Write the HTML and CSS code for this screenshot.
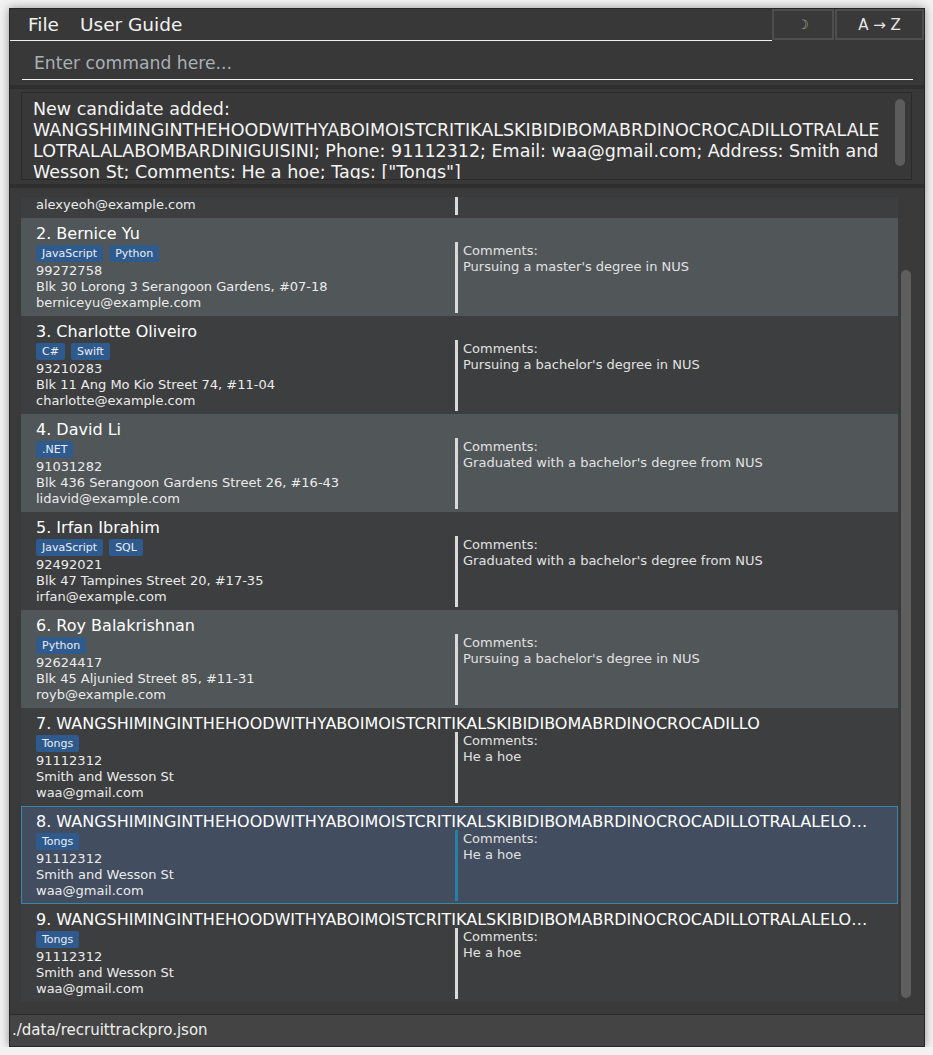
FILE: index.html
```html
<!DOCTYPE html>
<html lang="en">
<head>
<meta charset="utf-8">
<title>RecruitTrackPro</title>
<link rel="stylesheet" href="styles.css">
</head>
<body>
<div class="window">
  <div class="menubar">
    <div class="menu-left">
      <span class="menu-item">File</span>
      <span class="menu-item">User Guide</span>
    </div>
    <button class="tool-btn moon-btn">☽</button>
    <button class="tool-btn sort-btn">A → Z</button>
  </div>

  <div class="command-pane">
    <div class="command-field">Enter command here...</div>
  </div>
  <div class="separator"></div>

  <div class="result-pane">
    <div class="result-box">
      <div class="result-text">
        <span class="rline">New candidate added:</span>
        <span class="rline">WANGSHIMINGINTHEHOODWITHYABOIMOISTCRITIKALSKIBIDIBOMABRDINOCROCADILLOTRALALE</span>
        <span class="rline">LOTRALALABOMBARDINIGUISINI; Phone: 91112312; Email: waa@gmail.com; Address: Smith and</span>
        <span class="rline">Wesson St; Comments: He a hoe; Tags: ["Tongs"]</span>
      </div>
      <div class="rscroll"><div class="rthumb"></div></div>
    </div>
  </div>
  <div class="separator"></div>

  <div class="list-pane">
    <div class="list-viewport">
      <div class="list-cells">
        <div class="card even">
          <div class="card-name">1. Alex Yeoh</div>
          <div class="card-body">
            <div class="details">
              <div class="tags"><span class="tag">Java</span></div>
              <div class="line">87438807</div>
              <div class="line">Blk 30 Geylang Street 29, #06-40</div>
              <div class="line">alexyeoh@example.com</div>
            </div>
            <div class="comments"><div class="line">&nbsp;</div></div>
          </div>
        </div>

        <div class="card odd">
          <div class="card-name">2. Bernice Yu</div>
          <div class="card-body">
            <div class="details">
              <div class="tags"><span class="tag">JavaScript</span><span class="tag">Python</span></div>
              <div class="line">99272758</div>
              <div class="line">Blk 30 Lorong 3 Serangoon Gardens, #07-18</div>
              <div class="line">berniceyu@example.com</div>
            </div>
            <div class="comments">
              <div class="line">Comments:</div>
              <div class="line">Pursuing a master's degree in NUS</div>
            </div>
          </div>
        </div>

        <div class="card even">
          <div class="card-name">3. Charlotte Oliveiro</div>
          <div class="card-body">
            <div class="details">
              <div class="tags"><span class="tag">C#</span><span class="tag">Swift</span></div>
              <div class="line">93210283</div>
              <div class="line">Blk 11 Ang Mo Kio Street 74, #11-04</div>
              <div class="line">charlotte@example.com</div>
            </div>
            <div class="comments">
              <div class="line">Comments:</div>
              <div class="line">Pursuing a bachelor's degree in NUS</div>
            </div>
          </div>
        </div>

        <div class="card odd">
          <div class="card-name">4. David Li</div>
          <div class="card-body">
            <div class="details">
              <div class="tags"><span class="tag">.NET</span></div>
              <div class="line">91031282</div>
              <div class="line">Blk 436 Serangoon Gardens Street 26, #16-43</div>
              <div class="line">lidavid@example.com</div>
            </div>
            <div class="comments">
              <div class="line">Comments:</div>
              <div class="line">Graduated with a bachelor's degree from NUS</div>
            </div>
          </div>
        </div>

        <div class="card even">
          <div class="card-name">5. Irfan Ibrahim</div>
          <div class="card-body">
            <div class="details">
              <div class="tags"><span class="tag">JavaScript</span><span class="tag">SQL</span></div>
              <div class="line">92492021</div>
              <div class="line">Blk 47 Tampines Street 20, #17-35</div>
              <div class="line">irfan@example.com</div>
            </div>
            <div class="comments">
              <div class="line">Comments:</div>
              <div class="line">Graduated with a bachelor's degree from NUS</div>
            </div>
          </div>
        </div>

        <div class="card odd">
          <div class="card-name">6. Roy Balakrishnan</div>
          <div class="card-body">
            <div class="details">
              <div class="tags"><span class="tag">Python</span></div>
              <div class="line">92624417</div>
              <div class="line">Blk 45 Aljunied Street 85, #11-31</div>
              <div class="line">royb@example.com</div>
            </div>
            <div class="comments">
              <div class="line">Comments:</div>
              <div class="line">Pursuing a bachelor's degree in NUS</div>
            </div>
          </div>
        </div>

        <div class="card even">
          <div class="card-name">7. WANGSHIMINGINTHEHOODWITHYABOIMOISTCRITIKALSKIBIDIBOMABRDINOCROCADILLO</div>
          <div class="card-body">
            <div class="details">
              <div class="tags"><span class="tag">Tongs</span></div>
              <div class="line">91112312</div>
              <div class="line">Smith and Wesson St</div>
              <div class="line">waa@gmail.com</div>
            </div>
            <div class="comments">
              <div class="line">Comments:</div>
              <div class="line">He a hoe</div>
            </div>
          </div>
        </div>

        <div class="card selected">
          <div class="card-name">8. WANGSHIMINGINTHEHOODWITHYABOIMOISTCRITIKALSKIBIDIBOMABRDINOCROCADILLOTRALALELOTRALALABOMBARDINIGUISINI</div>
          <div class="card-body">
            <div class="details">
              <div class="tags"><span class="tag">Tongs</span></div>
              <div class="line">91112312</div>
              <div class="line">Smith and Wesson St</div>
              <div class="line">waa@gmail.com</div>
            </div>
            <div class="comments">
              <div class="line">Comments:</div>
              <div class="line">He a hoe</div>
            </div>
          </div>
        </div>

        <div class="card even">
          <div class="card-name">9. WANGSHIMINGINTHEHOODWITHYABOIMOISTCRITIKALSKIBIDIBOMABRDINOCROCADILLOTRALALELOTRALALABOMBARDINIGUISINI</div>
          <div class="card-body">
            <div class="details">
              <div class="tags"><span class="tag">Tongs</span></div>
              <div class="line">91112312</div>
              <div class="line">Smith and Wesson St</div>
              <div class="line">waa@gmail.com</div>
            </div>
            <div class="comments">
              <div class="line">Comments:</div>
              <div class="line">He a hoe</div>
            </div>
          </div>
        </div>
      </div>
      <div class="lscroll"><div class="lthumb"></div></div>
    </div>
  </div>

  <div class="status-bar">./data/recruittrackpro.json</div>
</div>
</body>
</html>
```

FILE: styles.css
```css
html, body {
  margin: 0;
  padding: 0;
}
body {
  background: #f2f2f2;
  font-family: "DejaVu Sans", "Liberation Sans", sans-serif;
  color: #ffffff;
}
.window {
  margin: 8px 0 0 9px;
  width: 914px;
  height: 1037px;
  border: 1px solid #262626;
  background: #383838;
  display: flex;
  flex-direction: column;
  box-shadow: 0 0 9px rgba(0, 0, 0, 0.4);
  overflow: hidden;
}

/* menu */
.menubar {
  display: flex;
  height: 32px;
  flex: none;
}
.menu-left {
  flex: 1;
  display: flex;
  align-items: center;
  padding-left: 8px;
  border-bottom: 1px solid #f0f0f0;
}
.menu-item {
  font-size: 18.5px;
  padding: 0 10px;
  color: #f2f2f2;
  line-height: 28px;
}
.menu-item + .menu-item {
  padding-left: 11px;
}
.tool-btn {
  height: 31px;
  background: #393939;
  border: 2px solid #4e4e4e;
  font-family: "DejaVu Sans", sans-serif;
  padding: 0;
  margin: 0;
}
.moon-btn {
  width: 62px;
  color: #b8b09a;
  font-size: 13px;
  margin-right: 1px;
}
.sort-btn {
  width: 89px;
  color: #e6e6e6;
  font-size: 15px;
}

/* command */
.command-pane {
  height: 44px;
  flex: none;
  padding: 6px 11px 0 12px;
  box-sizing: border-box;
}
.command-field {
  height: 32px;
  line-height: 32px;
  border-bottom: 1px solid #f4f4f4;
  padding-left: 12px;
  font-size: 17.2px;
  color: #a9b0b6;
}
.separator {
  height: 4px;
  flex: none;
  background: #2e2e2e;
}

/* result */
.result-pane {
  height: 95px;
  flex: none;
  padding: 3px 12px 0 11px;
  box-sizing: border-box;
}
.result-box {
  height: 88px;
  box-sizing: border-box;
  border: 1px solid #2a2a2a;
  background: #383838;
  display: flex;
  overflow: hidden;
}
.result-text {
  flex: 1;
  min-width: 0;
  padding: 6px 0 0 11px;
  font-size: 17.5px;
  line-height: 21px;
  color: #f4f4f4;
  overflow: hidden;
}
.rline {
  display: block;
  white-space: nowrap;
}
.rscroll {
  width: 16px;
  flex: none;
  padding-top: 6px;
}
.rthumb {
  width: 10px;
  height: 67px;
  background: #5c5c5c;
  border-radius: 5px;
}

/* list */
.list-pane {
  flex: 1;
  padding: 9px 10px 10px 11px;
  box-sizing: border-box;
  background: #3a3a3a;
  min-height: 0;
}
.list-viewport {
  height: 100%;
  display: flex;
  overflow: hidden;
}
.list-cells {
  flex: 1;
  min-width: 0;
  margin-top: -77px;
}
.lscroll {
  width: 16px;
  flex: none;
  padding: 73px 0 0 3px;
  box-sizing: border-box;
}
.lthumb {
  width: 10px;
  height: 728px;
  background: #5e5e5e;
  border-radius: 5px;
}

.card {
  height: 98px;
  box-sizing: border-box;
  padding: 6px 22px 3px 15px;
  overflow: hidden;
}
.card.even {
  background: #3c3e3f;
}
.card.odd {
  background: #515658;
}
.card.selected {
  background: #424d5f;
  border: 1px solid #3a86a8;
  padding: 5px 21px 2px 14px;
}
.card-name {
  font-size: 16px;
  line-height: 20px;
  height: 18px;
  color: #ffffff;
  white-space: nowrap;
  overflow: hidden;
  text-overflow: ellipsis;
}
.card-body {
  display: grid;
  grid-template-columns: 419px 1fr;
  height: 71px;
}
.details {
  padding-top: 3px;
}
.tags {
  display: flex;
  gap: 6px;
  height: 17px;
  margin-bottom: 1px;
}
.tag {
  background: #2f5a8e;
  color: #e8eef6;
  font-size: 11px;
  line-height: 17px;
  padding: 0 6px;
  border-radius: 2px;
}
.line {
  font-size: 13px;
  line-height: 16px;
  color: #ececec;
  white-space: nowrap;
}
.comments {
  border-left: 3px solid #d9d9d9;
  padding: 1px 0 0 5px;
}
.comments .line {
  color: #e2e2e2;
}
.card.selected .comments {
  border-left-color: #2a7ea6;
}

/* status */
.status-bar {
  height: 32px;
  flex: none;
  box-sizing: border-box;
  border-top: 1px solid #2a2a2a;
  background: #444444;
  padding-left: 2px;
  font-size: 15px;
  line-height: 31px;
  color: #f0f0f0;
}
```
